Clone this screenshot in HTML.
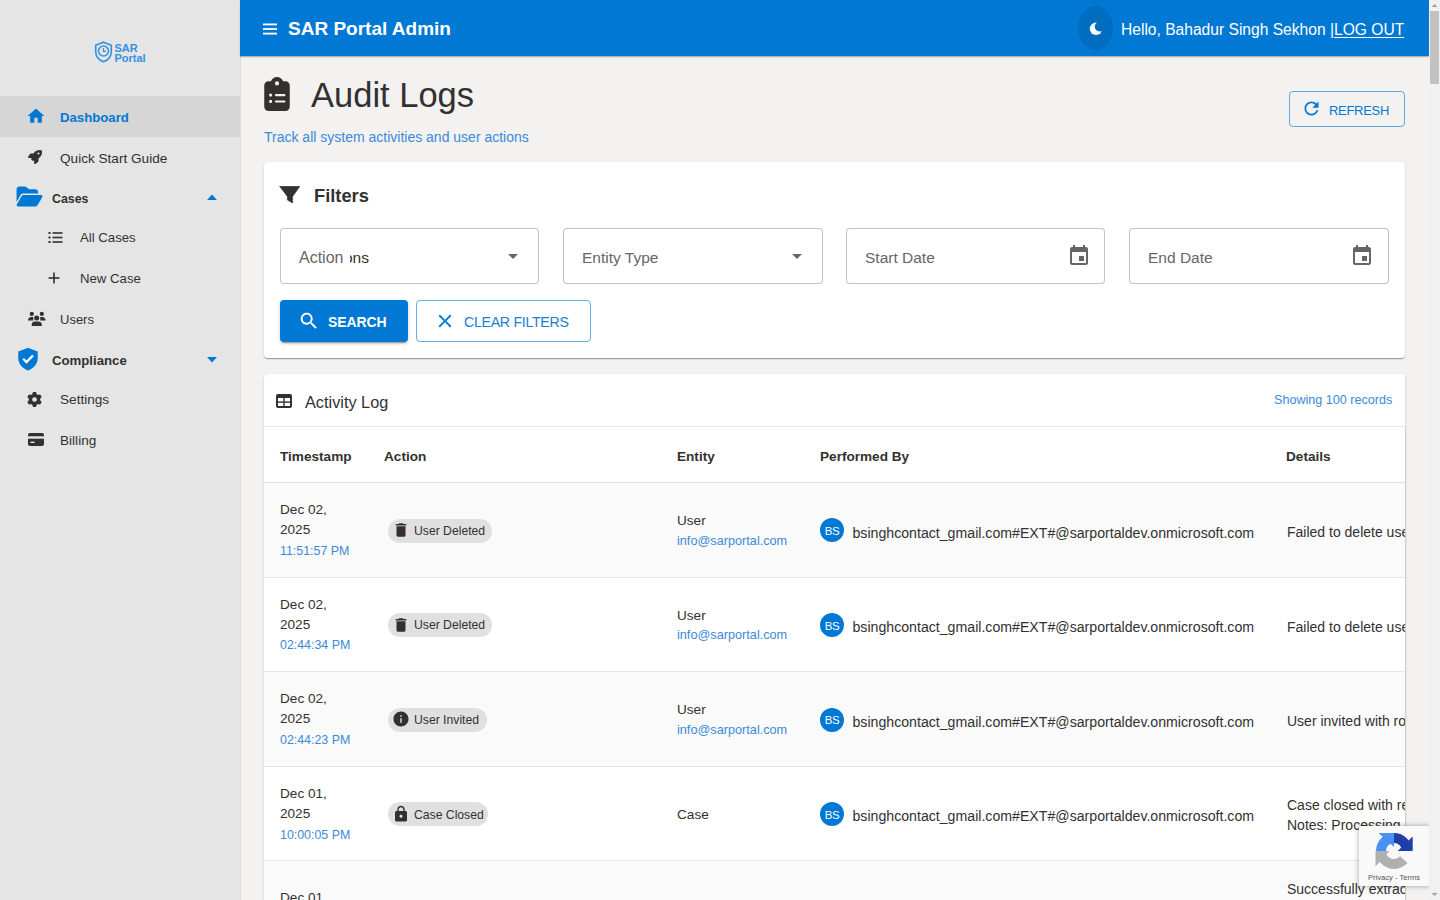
<!DOCTYPE html>
<html><head><meta charset="utf-8"><title>Audit Logs</title>
<style>
html,body{margin:0;padding:0;width:1440px;height:900px;overflow:hidden;background:#f3f2f1;font-family:"Liberation Sans", sans-serif;}
.t{position:absolute;white-space:nowrap;}
svg{display:block}
</style></head><body>
<div style="position:absolute;left:0px;top:0px;width:240px;height:900px;background:#e5e5e5"></div>
<svg style="position:absolute;left:94px;top:41px;" width="19" height="22" viewBox="0 0 19 22" fill="#3391e0"><path d="M9.5 1.2 L17.3 4.2 V10.5 C17.3 15.5 13.9 19.2 9.5 20.8 C5.1 19.2 1.7 15.5 1.7 10.5 V4.2 Z" fill="none" stroke="#3391e0" stroke-width="1.6"/><circle cx="9.5" cy="10" r="5" fill="none" stroke="#3391e0" stroke-width="1.5"/><path d="M9.5 7 V10.3 H12" fill="none" stroke="#3391e0" stroke-width="1.3"/></svg>
<div class="t" style="left:114.50px;top:42.48px;font-size:11px;line-height:12px;color:#3391e0;font-weight:700;">SAR</div>
<div class="t" style="left:114.50px;top:51.88px;font-size:11px;line-height:12px;color:#3391e0;font-weight:700;">Portal</div>
<div style="position:absolute;left:0px;top:96px;width:240px;height:41px;background:#d6d6d6"></div>
<svg style="position:absolute;left:26px;top:106px;" width="20" height="20" viewBox="0 0 24 24" fill="#0078d4"><path d="M10 20v-6h4v6h5v-8h3L12 3 2 12h3v8z"/></svg>
<div class="t" style="left:60.00px;top:107.92px;font-size:13.2px;line-height:20px;color:#0078d4;font-weight:700;">Dashboard</div>
<svg style="position:absolute;left:28px;top:150px;" width="14" height="14" viewBox="0 0 512 512" fill="#323130"><path d="M156.6 384.9L125.7 354c-8.5-8.5-11.5-20.8-7.7-32.2c3-8.9 7-20.5 11.8-33.8L24 288c-8.6 0-16.6-4.6-20.9-12.1s-4.2-16.7 .2-24.1l52.5-88.5c13-21.9 36.5-35.3 61.9-35.3l82.3 0c2.4-4 4.8-7.7 7.2-11.3C289.1-4.1 411.1-8.1 483.9 5.3c11.6 2.1 20.6 11.2 22.8 22.8c13.4 72.9 9.3 194.8-111.4 276.7c-3.5 2.4-7.3 4.8-11.3 7.2v82.3c0 25.4-13.4 49-35.3 61.9l-88.5 52.5c-7.4 4.4-16.6 4.5-24.1 .2s-12.1-12.2-12.1-20.9V380.8c-14.1 4.9-26.4 8.9-35.7 11.9c-11.2 3.6-23.4 .5-31.8-7.8zM384 168a40 40 0 1 0 0-80 40 40 0 1 0 0 80z"/></svg>
<div class="t" style="left:60.00px;top:148.78px;font-size:13.6px;line-height:20px;color:#323130;font-weight:400;">Quick Start Guide</div>
<svg style="position:absolute;left:15px;top:185px;" width="29" height="23" viewBox="0 0 576 512" fill="#0078d4"><path d="M88.7 223.8L0 375.8V96C0 60.7 28.7 32 64 32H181.5c17 0 33.3 6.7 45.3 18.7l26.5 26.5c12 12 28.3 18.7 45.3 18.7H416c35.3 0 64 28.7 64 64v32H144c-22.8 0-43.8 12.1-55.3 31.8zm27.6 16.1C122.1 230 132.6 224 144 224H544c11.5 0 22 6.1 27.7 16.1s5.7 22.2-.1 32.1l-112 192C453.9 474 443.4 480 432 480H32c-11.5 0-22-6.1-27.7-16.1s-5.7-22.2 .1-32.1l112-192z"/></svg>
<div class="t" style="left:52.00px;top:189.00px;font-size:12.4px;line-height:20px;color:#323130;font-weight:700;">Cases</div>
<svg style="position:absolute;left:205px;top:190px;" width="14" height="14" viewBox="0 0 14 14" fill="#0078d4"><path d="M2 10 L7 4.5 L12 10 Z"/></svg>
<svg style="position:absolute;left:48px;top:231px;" width="15" height="13" viewBox="0 0 15 13" fill="#323130"><rect x="0.5" y="1" width="2" height="2"/><rect x="0.5" y="5.5" width="2" height="2"/><rect x="0.5" y="10" width="2" height="2"/><rect x="4.5" y="1.2" width="10" height="1.6"/><rect x="4.5" y="5.7" width="10" height="1.6"/><rect x="4.5" y="10.2" width="10" height="1.6"/></svg>
<div class="t" style="left:80.00px;top:228.42px;font-size:13.2px;line-height:20px;color:#323130;font-weight:400;">All Cases</div>
<svg style="position:absolute;left:47px;top:271px;" width="14" height="14" viewBox="0 0 14 14" fill="#323130"><rect x="6.2" y="1.5" width="1.6" height="11"/><rect x="1.5" y="6.2" width="11" height="1.6"/></svg>
<div class="t" style="left:80.00px;top:269.22px;font-size:13.2px;line-height:20px;color:#323130;font-weight:400;">New Case</div>
<svg style="position:absolute;left:20px;top:300px;" width="30" height="30" viewBox="0 0 30 30" fill="#323130"><circle cx="11.8" cy="13.9" r="2.1"/><circle cx="21.8" cy="13.9" r="2.1"/><path d="M8 20.6 C8 18.2 9.6 17 11 17 H13.6 C13.2 17.8 13.1 18.6 13.4 20.6 Z"/><path d="M25.6 20.6 C25.6 18.2 24 17 22.6 17 H20 C20.4 17.8 20.5 18.6 20.2 20.6 Z"/><circle cx="16.7" cy="17.9" r="2.5"/><path d="M11.7 25.9 V24.5 C11.7 22.6 13.2 21.4 14.8 21.4 H18.6 C20.2 21.4 21.8 22.6 21.8 24.5 V25.9 Z"/></svg>
<div class="t" style="left:60.00px;top:310.49px;font-size:13px;line-height:20px;color:#323130;font-weight:400;">Users</div>
<svg style="position:absolute;left:15px;top:346px;" width="26" height="26" viewBox="0 0 24 24" fill="#0078d4"><path d="M12 1.5 L21 5 V11 C21 16.5 17 20.8 12 22.5 C7 20.8 3 16.5 3 11 V5 Z"/><path d="M7.6 11.8 L10.6 14.8 L16.6 8.8" fill="none" stroke="#fff" stroke-width="2.1"/></svg>
<div class="t" style="left:52.00px;top:350.72px;font-size:13.2px;line-height:20px;color:#323130;font-weight:700;">Compliance</div>
<svg style="position:absolute;left:205px;top:353px;" width="14" height="14" viewBox="0 0 14 14" fill="#0078d4"><path d="M2 4 L12 4 L7 9.5 Z"/></svg>
<svg style="position:absolute;left:27px;top:392px;" width="15" height="15" viewBox="0 0 512 512" fill="#323130"><path d="M495.9 166.6c3.2 8.7 .5 18.4-6.4 24.6l-43.3 39.4c1.1 8.3 1.7 16.8 1.7 25.4s-.6 17.1-1.7 25.4l43.3 39.4c6.9 6.2 9.6 15.9 6.4 24.6c-4.4 11.9-9.7 23.3-15.8 34.3l-4.7 8.1c-6.6 11-14 21.4-22.1 31.2c-5.9 7.2-15.7 9.6-24.5 6.8l-55.7-17.7c-13.4 10.3-28.2 18.9-44 25.4l-12.5 57.1c-2 9.1-9 16.3-18.2 17.8c-13.8 2.3-28 3.5-42.5 3.5s-28.7-1.2-42.5-3.5c-9.2-1.5-16.2-8.7-18.2-17.8l-12.5-57.1c-15.8-6.5-30.6-15.1-44-25.4L83.1 425.9c-8.8 2.8-18.6 .3-24.5-6.8c-8.1-9.8-15.5-20.2-22.1-31.2l-4.7-8.1c-6.1-11-11.4-22.4-15.8-34.3c-3.2-8.7-.5-18.4 6.4-24.6l43.3-39.4C64.6 273.1 64 264.6 64 256s.6-17.1 1.7-25.4L22.4 191.2c-6.9-6.2-9.6-15.9-6.4-24.6c4.4-11.9 9.7-23.3 15.8-34.3l4.7-8.1c6.6-11 14-21.4 22.1-31.2c5.9-7.2 15.7-9.6 24.5-6.8l55.7 17.7c13.4-10.3 28.2-18.9 44-25.4l12.5-57.1c2-9.1 9-16.3 18.2-17.8C227.3 1.2 241.5 0 256 0s28.7 1.2 42.5 3.5c9.2 1.5 16.2 8.7 18.2 17.8l12.5 57.1c15.8 6.5 30.6 15.1 44 25.4l55.7-17.7c8.8-2.8 18.6-.3 24.5 6.8c8.1 9.8 15.5 20.2 22.1 31.2l4.7 8.1c6.1 11 11.4 22.4 15.8 34.3zM256 336a80 80 0 1 0 0-160 80 80 0 1 0 0 160z"/></svg>
<div class="t" style="left:60.00px;top:390.28px;font-size:13.6px;line-height:20px;color:#323130;font-weight:400;">Settings</div>
<svg style="position:absolute;left:28px;top:433px;" width="16" height="13" viewBox="0 0 16 13" fill="#323130"><rect x="0" y="0" width="16" height="13" rx="2"/><rect x="0" y="3.3" width="16" height="2.4" fill="#e5e5e5"/><rect x="2.5" y="8.6" width="4" height="1.4" fill="#e5e5e5"/></svg>
<div class="t" style="left:60.00px;top:431.28px;font-size:13.6px;line-height:20px;color:#323130;font-weight:400;">Billing</div>
<div style="position:absolute;left:240px;top:0px;width:1189px;height:900px;background:#f3f2f1"></div>
<div style="position:absolute;left:240px;top:0px;width:1px;height:900px;background:#dddcdb"></div>
<div style="position:absolute;left:240px;top:0px;width:1189px;height:56px;background:#0078d4;box-shadow:0 1px 1px rgba(0,0,0,0.22),0 2px 2px rgba(0,0,0,0.05)"></div>
<svg style="position:absolute;left:263px;top:23px;" width="14" height="12" viewBox="0 0 14 12" fill="#fff"><rect x="0" y="0.5" width="14" height="1.8"/><rect x="0" y="5.1" width="14" height="1.8"/><rect x="0" y="9.7" width="14" height="1.8"/></svg>
<div class="t" style="left:288.00px;top:19.11px;font-size:19px;line-height:20px;color:#fff;font-weight:700;">SAR Portal Admin</div>
<div style="position:absolute;left:1078px;top:6px;width:35px;height:44px;background:rgba(0,0,0,0.09);border-radius:50%"></div>
<svg style="position:absolute;left:1089px;top:22px" width="14" height="14" viewBox="0 0 14 14"><mask id="mm"><rect width="14" height="14" fill="#fff"/><circle cx="10.6" cy="4.6" r="4.9" fill="#000"/></mask><circle cx="7" cy="6.8" r="6.2" fill="#fff" mask="url(#mm)"/></svg>
<div class="t" style="left:1121.00px;top:19.99px;font-size:15.6px;line-height:20px;color:#fff;font-weight:400;">Hello, Bahadur Singh Sekhon |<span style="text-decoration:underline;text-underline-offset:2px">LOG OUT</span></div>
<svg style="position:absolute;left:264px;top:77px;" width="26" height="34" viewBox="0 0 384 512" fill="#323130"><path d="M192 0c-41.8 0-77.4 26.7-90.5 64H64C28.7 64 0 92.7 0 128V448c0 35.3 28.7 64 64 64H320c35.3 0 64-28.7 64-64V128c0-35.3-28.7-64-64-64H282.5C269.4 26.7 233.8 0 192 0zm0 64a32 32 0 1 1 0 64 32 32 0 1 1 0-64zM72 272a24 24 0 1 1 48 0 24 24 0 1 1 -48 0zm104-16H304c8.8 0 16 7.2 16 16s-7.2 16-16 16H176c-8.8 0-16-7.2-16-16s7.2-16 16-16zM72 368a24 24 0 1 1 48 0 24 24 0 1 1 -48 0zm88 0c0-8.8 7.2-16 16-16H304c8.8 0 16 7.2 16 16s-7.2 16-16 16H176c-8.8 0-16-7.2-16-16z"/></svg>
<div class="t" style="left:311.00px;top:75.33px;font-size:34.5px;line-height:40px;color:#323130;font-weight:400;">Audit Logs</div>
<div class="t" style="left:264.00px;top:126.64px;font-size:14px;line-height:20px;color:#3a8ad8;font-weight:400;">Track all system activities and user actions</div>
<div style="position:absolute;left:1289px;top:91px;width:116px;height:36px;box-sizing:border-box;border:1px solid rgba(0,120,212,0.6);border-radius:4px"></div>
<svg style="position:absolute;left:1301px;top:98px;" width="21" height="21" viewBox="0 0 24 24" fill="#0078d4"><path d="M17.65 6.35C16.2 4.9 14.21 4 12 4c-4.42 0-7.99 3.58-7.99 8s3.57 8 7.99 8c3.73 0 6.84-2.55 7.73-6h-2.08c-.82 2.33-3.04 4-5.65 4-3.31 0-6-2.69-6-6s2.69-6 6-6c1.66 0 3.14.69 4.22 1.78L13 11h7V4l-2.35 2.35z"/></svg>
<div class="t" style="left:1329.00px;top:100.69px;font-size:13px;line-height:20px;color:#0078d4;font-weight:400;letter-spacing:-0.3px">REFRESH</div>
<div style="position:absolute;left:264px;top:162px;width:1141px;height:196px;background:#fff;border-radius:4px;box-shadow:0 2px 1px -1px rgba(0,0,0,0.2),0 1px 1px 0 rgba(0,0,0,0.14),0 1px 3px 0 rgba(0,0,0,0.12)"></div>
<svg style="position:absolute;left:279px;top:186px;" width="21" height="17" viewBox="0 0 21 17" fill="#323130"><path d="M0.6 0.3 H20.9 L13.6 10.6 V17 L8.4 14 V10.6 Z" stroke="#323130" stroke-width="0.6" stroke-linejoin="round"/></svg>
<div class="t" style="left:314.00px;top:185.95px;font-size:18.3px;line-height:20px;color:#323130;font-weight:700;">Filters</div>
<div style="position:absolute;left:280px;top:228px;width:259px;height:56px;box-sizing:border-box;border:1px solid rgba(0,0,0,0.23);border-radius:4px;background:#fff"></div>
<div style="position:absolute;left:563px;top:228px;width:260px;height:56px;box-sizing:border-box;border:1px solid rgba(0,0,0,0.23);border-radius:4px;background:#fff"></div>
<div style="position:absolute;left:846px;top:228px;width:259px;height:56px;box-sizing:border-box;border:1px solid rgba(0,0,0,0.23);border-radius:4px;background:#fff"></div>
<div style="position:absolute;left:1129px;top:228px;width:260px;height:56px;box-sizing:border-box;border:1px solid rgba(0,0,0,0.23);border-radius:4px;background:#fff"></div>
<div class="t" style="left:299.00px;top:248.45px;font-size:16px;line-height:20px;color:#666666;font-weight:400;">Action</div>
<div style="position:absolute;left:350px;top:240px;width:22px;height:30px;overflow:hidden"><div class="t" style="left:-6px;top:2.62px;font-size:15.5px;line-height:30px;color:#323130">ons</div></div>
<svg style="position:absolute;left:501px;top:244px;" width="24" height="24" viewBox="0 0 24 24" fill="#666"><path d="M7 10l5 5 5-5z"/></svg>
<div class="t" style="left:582.00px;top:247.82px;font-size:15.5px;line-height:20px;color:#666666;font-weight:400;">Entity Type</div>
<svg style="position:absolute;left:785px;top:244px;" width="24" height="24" viewBox="0 0 24 24" fill="#666"><path d="M7 10l5 5 5-5z"/></svg>
<div class="t" style="left:865.00px;top:247.62px;font-size:15.5px;line-height:20px;color:#666666;font-weight:400;">Start Date</div>
<svg style="position:absolute;left:1067px;top:244px;" width="24" height="24" viewBox="0 0 24 24" fill="#666"><path d="M17 12h-5v5h5v-5zM16 1v2H8V1H6v2H5c-1.11 0-1.99.9-1.99 2L3 19c0 1.1.89 2 2 2h14c1.1 0 2-.9 2-2V5c0-1.1-.9-2-2-2h-1V1h-2zm3 18H5V8h14v11z"/></svg>
<div class="t" style="left:1148.00px;top:247.62px;font-size:15.5px;line-height:20px;color:#666666;font-weight:400;">End Date</div>
<svg style="position:absolute;left:1350px;top:244px;" width="24" height="24" viewBox="0 0 24 24" fill="#666"><path d="M17 12h-5v5h5v-5zM16 1v2H8V1H6v2H5c-1.11 0-1.99.9-1.99 2L3 19c0 1.1.89 2 2 2h14c1.1 0 2-.9 2-2V5c0-1.1-.9-2-2-2h-1V1h-2zm3 18H5V8h14v11z"/></svg>
<div style="position:absolute;left:280px;top:300px;width:128px;height:42px;background:#0078d4;border-radius:4px;box-shadow:0 3px 1px -2px rgba(0,0,0,0.2),0 2px 2px 0 rgba(0,0,0,0.14),0 1px 5px 0 rgba(0,0,0,0.12)"></div>
<svg style="position:absolute;left:298px;top:310px;" width="22" height="22" viewBox="0 0 24 24" fill="#fff"><path d="M15.5 14h-.79l-.28-.27C15.41 12.59 16 11.11 16 9.5 16 5.91 13.09 3 9.5 3S3 5.91 3 9.5 5.91 16 9.5 16c1.61 0 3.09-.59 4.23-1.57l.27.28v.79l5 4.99L20.49 19l-4.99-5zm-6 0C7.01 14 5 11.99 5 9.5S7.01 5 9.5 5 14 7.01 14 9.5 11.99 14 9.5 14z"/></svg>
<div class="t" style="left:328.00px;top:312.44px;font-size:14px;line-height:20px;color:#fff;font-weight:700;letter-spacing:-0.1px">SEARCH</div>
<div style="position:absolute;left:416px;top:300px;width:175px;height:42px;box-sizing:border-box;border:1px solid rgba(0,120,212,0.6);border-radius:4px"></div>
<svg style="position:absolute;left:434px;top:310px;" width="22" height="22" viewBox="0 0 24 24" fill="#0078d4"><path d="M19 6.41L17.59 5 12 10.59 6.41 5 5 6.41 10.59 12 5 17.59 6.41 19 12 13.41 17.59 19 19 17.59 13.41 12z"/></svg>
<div class="t" style="left:464.00px;top:312.37px;font-size:14.2px;line-height:20px;color:#1a7dd6;font-weight:400;letter-spacing:-0.3px">CLEAR FILTERS</div>
<div style="position:absolute;left:264px;top:374px;width:1141px;height:600px;background:#fff;border-radius:4px;box-shadow:0 2px 1px -1px rgba(0,0,0,0.2),0 1px 1px 0 rgba(0,0,0,0.14),0 1px 3px 0 rgba(0,0,0,0.12)"></div>
<svg style="position:absolute;left:276px;top:394px;" width="16" height="14" viewBox="0 0 16 14" fill="#323130"><rect x="0" y="0" width="16" height="14" rx="2"/><rect x="2" y="4" width="5.3" height="3.4" fill="#fff"/><rect x="8.7" y="4" width="5.3" height="3.4" fill="#fff"/><rect x="2" y="8.8" width="5.3" height="3.2" fill="#fff"/><rect x="8.7" y="8.8" width="5.3" height="3.2" fill="#fff"/></svg>
<div class="t" style="left:305.00px;top:392.04px;font-size:16.3px;line-height:20px;color:#323130;font-weight:400;">Activity Log</div>
<div class="t" style="left:1274.00px;top:389.63px;font-size:12.6px;line-height:20px;color:#3a8ad8;font-weight:400;">Showing 100 records</div>
<div style="position:absolute;left:264px;top:426px;width:1141px;height:1px;background:#e8e8e8"></div>
<div class="t" style="left:280.00px;top:446.53px;font-size:13.6px;line-height:20px;color:#323130;font-weight:700;">Timestamp</div>
<div class="t" style="left:384.00px;top:446.53px;font-size:13.6px;line-height:20px;color:#323130;font-weight:700;">Action</div>
<div class="t" style="left:677.00px;top:446.53px;font-size:13.6px;line-height:20px;color:#323130;font-weight:700;">Entity</div>
<div class="t" style="left:820.00px;top:446.53px;font-size:13.6px;line-height:20px;color:#323130;font-weight:700;">Performed By</div>
<div class="t" style="left:1286.00px;top:446.53px;font-size:13.6px;line-height:20px;color:#323130;font-weight:700;">Details</div>
<div style="position:absolute;left:264px;top:482px;width:1141px;height:1px;background:#e0e0e0"></div>
<div style="position:absolute;left:264px;top:483px;width:1141px;height:95px;background:#fafafa"></div>
<div style="position:absolute;left:264px;top:577px;width:1141px;height:1px;background:#e6e6e6"></div>
<div class="t" style="left:280.00px;top:500.28px;font-size:13.6px;line-height:20px;color:#323130;font-weight:400;">Dec 02,</div>
<div class="t" style="left:280.00px;top:520.28px;font-size:13.6px;line-height:20px;color:#323130;font-weight:400;">2025</div>
<div class="t" style="left:280.00px;top:540.70px;font-size:12.4px;line-height:20px;color:#3a8ad8;font-weight:400;">11:51:57 PM</div>
<div style="position:absolute;left:388px;top:519px;width:104px;height:24px;background:#e0e0e0;border-radius:12px"></div>
<svg style="position:absolute;left:392px;top:521px;" width="18" height="18" viewBox="0 0 24 24" fill="#323130"><path d="M6 19c0 1.1.9 2 2 2h8c1.1 0 2-.9 2-2V7H6v12zM19 4h-3.5l-1-1h-5l-1 1H5v2h14V4z"/></svg>
<div class="t" style="left:414.00px;top:520.77px;font-size:12.2px;line-height:20px;color:#323130;font-weight:400;">User Deleted</div>
<div class="t" style="left:677.00px;top:510.98px;font-size:13.6px;line-height:20px;color:#323130;font-weight:400;">User</div>
<div class="t" style="left:677.00px;top:530.59px;font-size:12.7px;line-height:20px;color:#3a8ad8;font-weight:400;">info@sarportal.com</div>
<div style="position:absolute;left:820px;top:518px;width:24px;height:24px;background:#0078d4;border-radius:50%"></div>
<div class="t" style="left:820.00px;top:521.11px;font-size:11.5px;line-height:20px;color:#fff;font-weight:400;"><div style="width:24px;text-align:center;letter-spacing:-0.4px">BS</div></div>
<div class="t" style="left:852.50px;top:522.59px;font-size:14.15px;line-height:20px;color:#323130;font-weight:400;">bsinghcontact_gmail.com#EXT#@sarportaldev.onmicrosoft.com</div>
<div class="t" style="left:1287.00px;top:522.24px;font-size:14px;line-height:20px;color:#323130;font-weight:400;">Failed to delete user</div>
<div style="position:absolute;left:264px;top:578px;width:1141px;height:95px;background:#fff"></div>
<div style="position:absolute;left:264px;top:671px;width:1141px;height:1px;background:#e6e6e6"></div>
<div class="t" style="left:280.00px;top:594.88px;font-size:13.6px;line-height:20px;color:#323130;font-weight:400;">Dec 02,</div>
<div class="t" style="left:280.00px;top:614.88px;font-size:13.6px;line-height:20px;color:#323130;font-weight:400;">2025</div>
<div class="t" style="left:280.00px;top:635.30px;font-size:12.4px;line-height:20px;color:#3a8ad8;font-weight:400;">02:44:34 PM</div>
<div style="position:absolute;left:388px;top:613px;width:104px;height:24px;background:#e0e0e0;border-radius:12px"></div>
<svg style="position:absolute;left:392px;top:616px;" width="18" height="18" viewBox="0 0 24 24" fill="#323130"><path d="M6 19c0 1.1.9 2 2 2h8c1.1 0 2-.9 2-2V7H6v12zM19 4h-3.5l-1-1h-5l-1 1H5v2h14V4z"/></svg>
<div class="t" style="left:414.00px;top:615.37px;font-size:12.2px;line-height:20px;color:#323130;font-weight:400;">User Deleted</div>
<div class="t" style="left:677.00px;top:605.58px;font-size:13.6px;line-height:20px;color:#323130;font-weight:400;">User</div>
<div class="t" style="left:677.00px;top:625.19px;font-size:12.7px;line-height:20px;color:#3a8ad8;font-weight:400;">info@sarportal.com</div>
<div style="position:absolute;left:820px;top:613px;width:24px;height:24px;background:#0078d4;border-radius:50%"></div>
<div class="t" style="left:820.00px;top:615.71px;font-size:11.5px;line-height:20px;color:#fff;font-weight:400;"><div style="width:24px;text-align:center;letter-spacing:-0.4px">BS</div></div>
<div class="t" style="left:852.50px;top:617.19px;font-size:14.15px;line-height:20px;color:#323130;font-weight:400;">bsinghcontact_gmail.com#EXT#@sarportaldev.onmicrosoft.com</div>
<div class="t" style="left:1287.00px;top:616.84px;font-size:14px;line-height:20px;color:#323130;font-weight:400;">Failed to delete user</div>
<div style="position:absolute;left:264px;top:672px;width:1141px;height:95px;background:#fafafa"></div>
<div style="position:absolute;left:264px;top:766px;width:1141px;height:1px;background:#e6e6e6"></div>
<div class="t" style="left:280.00px;top:689.48px;font-size:13.6px;line-height:20px;color:#323130;font-weight:400;">Dec 02,</div>
<div class="t" style="left:280.00px;top:709.48px;font-size:13.6px;line-height:20px;color:#323130;font-weight:400;">2025</div>
<div class="t" style="left:280.00px;top:729.90px;font-size:12.4px;line-height:20px;color:#3a8ad8;font-weight:400;">02:44:23 PM</div>
<div style="position:absolute;left:388px;top:708px;width:99px;height:24px;background:#e0e0e0;border-radius:12px"></div>
<svg style="position:absolute;left:392px;top:710px;" width="18" height="18" viewBox="0 0 24 24" fill="#323130"><path d="M12 2C6.48 2 2 6.48 2 12s4.48 10 10 10 10-4.48 10-10S17.52 2 12 2zm1 15h-2v-6h2v6zm0-8h-2V7h2v2z"/></svg>
<div class="t" style="left:414.00px;top:709.97px;font-size:12.2px;line-height:20px;color:#323130;font-weight:400;">User Invited</div>
<div class="t" style="left:677.00px;top:700.18px;font-size:13.6px;line-height:20px;color:#323130;font-weight:400;">User</div>
<div class="t" style="left:677.00px;top:719.79px;font-size:12.7px;line-height:20px;color:#3a8ad8;font-weight:400;">info@sarportal.com</div>
<div style="position:absolute;left:820px;top:708px;width:24px;height:24px;background:#0078d4;border-radius:50%"></div>
<div class="t" style="left:820.00px;top:710.31px;font-size:11.5px;line-height:20px;color:#fff;font-weight:400;"><div style="width:24px;text-align:center;letter-spacing:-0.4px">BS</div></div>
<div class="t" style="left:852.50px;top:711.79px;font-size:14.15px;line-height:20px;color:#323130;font-weight:400;">bsinghcontact_gmail.com#EXT#@sarportaldev.onmicrosoft.com</div>
<div class="t" style="left:1287.00px;top:711.44px;font-size:14px;line-height:20px;color:#323130;font-weight:400;">User invited with role</div>
<div style="position:absolute;left:264px;top:767px;width:1141px;height:95px;background:#fff"></div>
<div style="position:absolute;left:264px;top:860px;width:1141px;height:1px;background:#e6e6e6"></div>
<div class="t" style="left:280.00px;top:784.08px;font-size:13.6px;line-height:20px;color:#323130;font-weight:400;">Dec 01,</div>
<div class="t" style="left:280.00px;top:804.08px;font-size:13.6px;line-height:20px;color:#323130;font-weight:400;">2025</div>
<div class="t" style="left:280.00px;top:824.50px;font-size:12.4px;line-height:20px;color:#3a8ad8;font-weight:400;">10:00:05 PM</div>
<div style="position:absolute;left:388px;top:802px;width:99.5px;height:24px;background:#e0e0e0;border-radius:12px"></div>
<svg style="position:absolute;left:392px;top:805px;" width="18" height="18" viewBox="0 0 24 24" fill="#323130"><path d="M18 8h-1V6c0-2.76-2.24-5-5-5S7 3.24 7 6v2H6c-1.1 0-2 .9-2 2v10c0 1.1.9 2 2 2h12c1.1 0 2-.9 2-2V10c0-1.1-.9-2-2-2zm-6 9c-1.1 0-2-.9-2-2s.9-2 2-2 2 .9 2 2-.9 2-2 2zm3.1-9H8.9V6c0-1.71 1.39-3.1 3.1-3.1 1.71 0 3.1 1.39 3.1 3.1v2z"/></svg>
<div class="t" style="left:414.00px;top:804.57px;font-size:12.2px;line-height:20px;color:#323130;font-weight:400;">Case Closed</div>
<div class="t" style="left:677.00px;top:804.58px;font-size:13.6px;line-height:20px;color:#323130;font-weight:400;">Case</div>
<div style="position:absolute;left:820px;top:802px;width:24px;height:24px;background:#0078d4;border-radius:50%"></div>
<div class="t" style="left:820.00px;top:804.91px;font-size:11.5px;line-height:20px;color:#fff;font-weight:400;"><div style="width:24px;text-align:center;letter-spacing:-0.4px">BS</div></div>
<div class="t" style="left:852.50px;top:806.39px;font-size:14.15px;line-height:20px;color:#323130;font-weight:400;">bsinghcontact_gmail.com#EXT#@sarportaldev.onmicrosoft.com</div>
<div class="t" style="left:1287.00px;top:795.24px;font-size:14px;line-height:20px;color:#323130;font-weight:400;">Case closed with reason</div>
<div class="t" style="left:1287.00px;top:815.24px;font-size:14px;line-height:20px;color:#323130;font-weight:400;">Notes: Processing complete</div>
<div style="position:absolute;left:264px;top:861px;width:1141px;height:40px;background:#fafafa"></div>
<div class="t" style="left:280.00px;top:887.78px;font-size:13.6px;line-height:20px;color:#323130;font-weight:400;">Dec 01,</div>
<div class="t" style="left:1287.00px;top:879.44px;font-size:14px;line-height:20px;color:#323130;font-weight:400;">Successfully extracted data</div>
<div style="position:absolute;left:1405px;top:374px;width:24px;height:526px;background:#f3f2f1"></div>
<div style="position:absolute;left:1405px;top:376px;width:1px;height:51px;background:#e2e2e2"></div>
<div style="position:absolute;left:1405px;top:427px;width:1px;height:473px;background:#cdcdcd"></div>
<div style="position:absolute;left:1406px;top:376px;width:1px;height:524px;background:#e9e8e7"></div>
<div style="position:absolute;left:1359px;top:826px;width:70px;height:60px;background:#f9f9f9;box-shadow:0 0 4px 1px rgba(0,0,0,0.25);border-radius:2px 0 0 2px">
<svg style="position:absolute;left:16px;top:6px" width="38" height="38" viewBox="-19 -19 38 38">
<path d="M-18 0 A18 18 0 0 1 0 -18 L0 -8 A8 8 0 0 0 -8 0 Z" fill="#4a90f0"/>
<path d="M-15.5 -18 L0 -18 L0 -4 Z" fill="#4a90f0"/>
<path d="M0 -18 A18 18 0 0 1 18 0 L8 0 A8 8 0 0 0 0 -8 Z" fill="#1f3ea8"/>
<path d="M18.7 -14.5 L18.7 0 L3.7 0 Z" fill="#1f3ea8"/>
<path d="M13.5 11.9 A18 18 0 0 1 -18 0 L-8 0 A8 8 0 0 0 6 5.3 Z" fill="#b0b0b0"/>
<path d="M-18.5 0 L-18.5 15.5 L-4.7 0 Z" fill="#b0b0b0"/>
</svg>
<div style="position:absolute;left:0;top:47px;width:70px;text-align:center;font-size:7.6px;line-height:10px;color:#555">Privacy - Terms</div>
</div>
<div style="position:absolute;left:1429px;top:0px;width:11px;height:900px;background:#f1f1f1"></div>
<div style="position:absolute;left:1430px;top:11px;width:9px;height:73px;background:#c1c1c1"></div>
<svg style="position:absolute;left:1430px;top:2px;" width="9" height="6" viewBox="0 0 9 6" fill="#a3a3a3"><path d="M1.5 5 L4.5 2 L7.5 5 Z"/></svg>
<svg style="position:absolute;left:1430px;top:892px;" width="9" height="6" viewBox="0 0 9 6" fill="#a3a3a3"><path d="M1.5 1 L4.5 4 L7.5 1 Z"/></svg>
</body></html>
